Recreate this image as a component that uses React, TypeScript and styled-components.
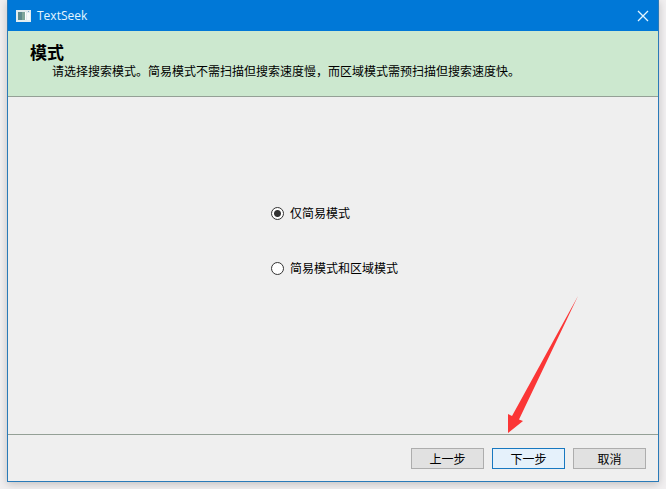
import React, { useState } from 'react';
import styled, { createGlobalStyle } from 'styled-components';

const GlobalStyle = createGlobalStyle`
  *, *::before, *::after { box-sizing: border-box; }
  body {
    margin: 0;
    background: #f1eff0;
    color: #000;
    font: 12px/16px "Noto Sans CJK SC", sans-serif;
  }
`;

const Desktop = styled.div`
  display: flex;
  min-height: 100vh;
  padding: 0 7px 7px;
`;

const Dialog = styled.main`
  flex: 1;
  display: flex;
  flex-direction: column;
  border: 1px solid #2a7ab8;
  border-top: 0;
  background: #efefef;
  box-shadow: 0 2px 8px rgba(0, 0, 0, 0.2);
`;

const TitleBar = styled.header`
  display: flex;
  align-items: center;
  gap: 6px;
  height: 31px;
  padding: 0 8px;
  background: #0078d7;
  color: #e4f6ff;
`;

const Title = styled.span`
  flex: 1;
  font: 12px/16px "Open Sans", sans-serif;
`;

const CloseButton = styled.button`
  display: flex;
  padding: 1px;
  border: 0;
  background: none;
  color: inherit;
`;

const Banner = styled.section`
  height: 66px;
  padding: 10px 22px;
  border-bottom: 1px solid #94a096;
  background: #cce8cf;
`;

const Heading = styled.h1`
  margin: 0;
  font-size: 17px;
  line-height: 22px;
  font-weight: 700;
`;

const Description = styled.p`
  margin: 0;
  padding-left: 22px;
`;

const Content = styled.section`
  position: relative;
  flex: 1;
  display: flex;
  align-items: center;
  justify-content: center;
`;

const Options = styled.fieldset`
  display: flex;
  flex-direction: column;
  gap: 39px;
  margin: 0;
  padding: 0 0 50px 3px;
  border: 0;
`;

const Option = styled.label`
  display: flex;
  align-items: center;
  gap: 6px;
`;

const Radio = styled.input`
  appearance: none;
  width: 13px;
  height: 13px;
  margin: 0;
  border: 1px solid #333;
  border-radius: 50%;
  background: #fff;

  &:checked {
    background: radial-gradient(circle, #333 3px, #fff 4px);
  }
`;

const Arrow = styled.svg`
  position: absolute;
  right: 79px;
  bottom: 0;
`;

const Footer = styled.footer`
  display: flex;
  justify-content: flex-end;
  gap: 8px;
  padding: 13px 12px 12px;
  border-top: 1px solid #94a096;
`;

const Button = styled.button<{ $primary?: boolean }>`
  width: 73px;
  height: 21px;
  padding: 0;
  border: 1px solid ${(p) => (p.$primary ? '#1878c0' : '#adadad')};
  background: ${(p) => (p.$primary ? '#e5f1fb' : '#e1e1e1')};
  color: inherit;
  font: inherit;
`;

const AppIcon = () => (
  <svg width="15" height="12" viewBox="0 0 15 12" aria-hidden="true">
    <rect width="15" height="12" fill="#e3ecef" />
    <rect x="2" y="2" width="7" height="8" fill="#7fa69a" />
    <rect x="2" y="2" width="4" height="8" fill="#5d8a8c" />
    <rect x="9" y="2" width="1" height="8" fill="#fff" />
    <rect x="11" y="3" width="3" height="7" fill="#f8fbfa" />
    <rect x="12" y="1" width="1" height="1" fill="#7eaccb" />
  </svg>
);

const CloseIcon = () => (
  <svg width="12" height="12" viewBox="0 0 12 12" aria-hidden="true">
    <path d="M1 1l10 10M11 1L1 11" stroke="currentColor" strokeWidth="1.3" />
  </svg>
);

const modes = [
  { value: 'simple', label: '仅简易模式' },
  { value: 'both', label: '简易模式和区域模式' },
];

export default function App() {
  const [mode, setMode] = useState('simple');

  return (
    <>
      <GlobalStyle />
      <Desktop>
        <Dialog>
          <TitleBar>
            <AppIcon />
            <Title>TextSeek</Title>
            <CloseButton type="button" aria-label="关闭">
              <CloseIcon />
            </CloseButton>
          </TitleBar>
          <Banner>
            <Heading>模式</Heading>
            <Description>
              请选择搜索模式。简易模式不需扫描但搜索速度慢，而区域模式需预扫描但搜索速度快。
            </Description>
          </Banner>
          <Content>
            <Options aria-label="模式">
              {modes.map(({ value, label }) => (
                <Option key={value}>
                  <Radio
                    type="radio"
                    name="mode"
                    value={value}
                    checked={mode === value}
                    onChange={() => setMode(value)}
                  />
                  {label}
                </Option>
              ))}
            </Options>
            <Arrow width="71" height="138" viewBox="0 0 71 138" aria-hidden="true">
              <path d="M70 0L4 120L0 118V137L15 125L11 123.500Z" fill="#fb3636" />
            </Arrow>
          </Content>
          <Footer>
            <Button type="button">上一步</Button>
            <Button type="button" $primary>下一步</Button>
            <Button type="button">取消</Button>
          </Footer>
        </Dialog>
      </Desktop>
    </>
  );
}
